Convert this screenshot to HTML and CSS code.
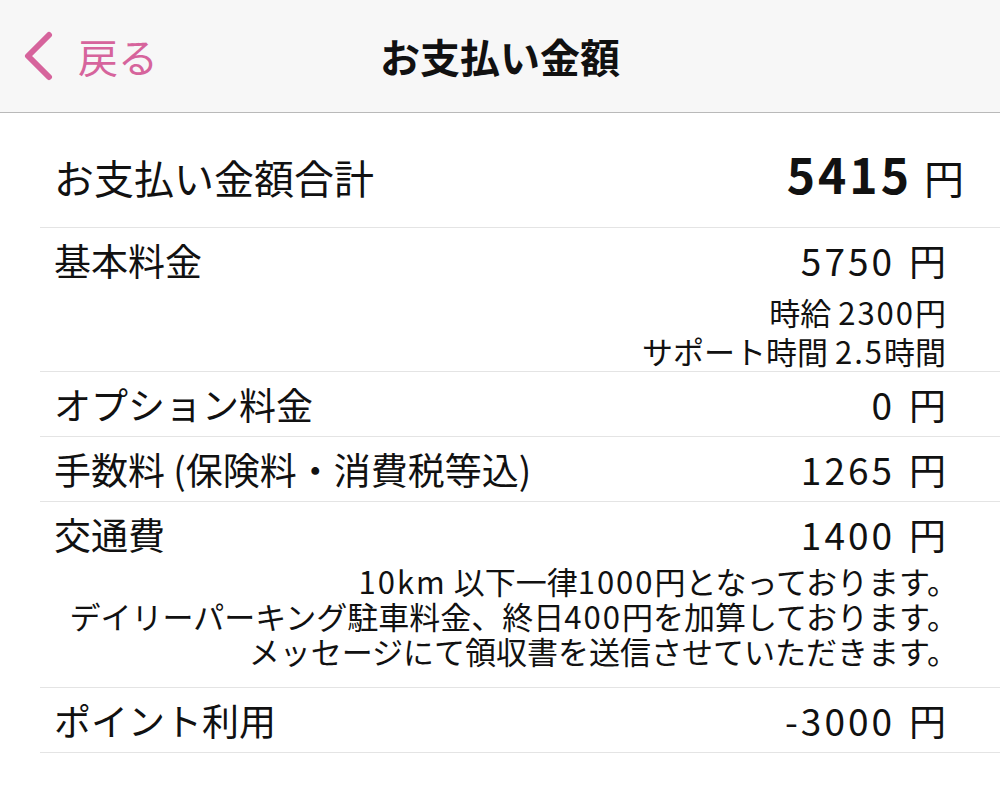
FILE: index.html
```html
<!DOCTYPE html>
<html lang="ja">
<head>
    <meta charset="UTF-8">
    <meta name="viewport" content="width=device-width, initial-scale=1.0">
    <title>お支払い金額</title>
    <link rel="stylesheet" href="styles.css">
</head>
<body>
    <header class="navbar">
        <a class="nav-back" href="#">
            <svg class="nav-back-icon" width="30" height="50" viewBox="0 0 30 50">
                <polyline points="25,4 4,25 25,46" fill="none" stroke="currentColor" stroke-width="6" stroke-linecap="round" stroke-linejoin="round"/>
            </svg>
            <span>戻る</span>
        </a>
        <h1 class="nav-title">お支払い金額</h1>
        <span></span>
    </header>

    <main class="list">
        <section class="row row-total">
            <div class="row-main">
                <span class="label">お支払い金額合計</span>
                <span class="amount"><b>5415</b><span class="yen">円</span></span>
            </div>
        </section>

        <section class="row row-basic">
            <div class="row-main">
                <span class="label">基本料金</span>
                <span class="amount">5750<span class="yen">円</span></span>
            </div>
            <div class="row-detail detail-wide">
                <p>時給 <span class="num">2300</span>円</p>
                <p>サポート時間 <span class="num">2.5</span>時間</p>
            </div>
        </section>

        <section class="row">
            <div class="row-main">
                <span class="label">オプション料金</span>
                <span class="amount">0<span class="yen">円</span></span>
            </div>
        </section>

        <section class="row">
            <div class="row-main">
                <span class="label">手数料 (保険料・消費税等込)</span>
                <span class="amount">1265<span class="yen">円</span></span>
            </div>
        </section>

        <section class="row row-notes">
            <div class="row-main">
                <span class="label">交通費</span>
                <span class="amount">1400<span class="yen">円</span></span>
            </div>
            <div class="row-detail detail-notes">
                <p><span class="num">10km</span> 以下一律<span class="num">1000</span>円となっております。</p>
                <p>デイリーパーキング駐車料金、終日<span class="num">400</span>円を加算しております。</p>
                <p>メッセージにて領収書を送信させていただきます。</p>
            </div>
        </section>

        <section class="row">
            <div class="row-main">
                <span class="label">ポイント利用</span>
                <span class="amount">-3000<span class="yen">円</span></span>
            </div>
        </section>
    </main>
</body>
</html>
```

FILE: styles.css
```css
html {
    box-sizing: border-box;
    font-family: "Noto Sans CJK JP", "Noto Sans", sans-serif;
    color: #111;
}

*, *::after, *::before {
    box-sizing: inherit;
}

body {
    margin: 0;
    background-color: #fff;
}

p {
    margin: 0;
}

.navbar {
    height: 113px;
    display: grid;
    grid-template-columns: 1fr auto 1fr;
    align-items: center;
    background-color: #f7f7f7;
    border-bottom: 1px solid #b9b9b9;
}

.nav-back {
    display: flex;
    align-items: center;
    gap: 24px;
    padding-left: 24px;
    color: #d6649c;
    text-decoration: none;
    font-size: 40px;
    line-height: 1;
}

.nav-back-icon {
    display: block;
}

.nav-title {
    margin: 0;
    font-size: 40px;
    font-weight: 700;
    line-height: 1;
}

.list {
    padding-left: 40px;
}

.row {
    border-bottom: 1px solid #e4e4e4;
    padding: 10px 54px 9px 14px;
}

.row-main {
    display: flex;
    justify-content: space-between;
    align-items: baseline;
    font-size: 37px;
    line-height: 45px;
}

.amount {
    letter-spacing: 3px;
}

.yen {
    margin-left: 14px;
    letter-spacing: 0;
}

.row-total {
    padding: 38px 36px 26px 14px;
}

.row-total .label {
    font-size: 40px;
    line-height: 48px;
}

.row-total .amount {
    font-size: 40px;
}

.row-total .amount b {
    font-size: 48px;
    font-weight: 700;
}

.row-total .yen {
    margin-left: 12px;
}

.row-basic {
    padding-bottom: 1px;
}

.row-detail {
    text-align: right;
    font-size: 31px;
}

.num {
    letter-spacing: 2px;
}

.detail-wide {
    line-height: 39px;
    padding-top: 9px;
}

.detail-notes {
    line-height: 35px;
    padding-top: 6px;
    padding-bottom: 10px;
    margin-right: -12px;
}
```
